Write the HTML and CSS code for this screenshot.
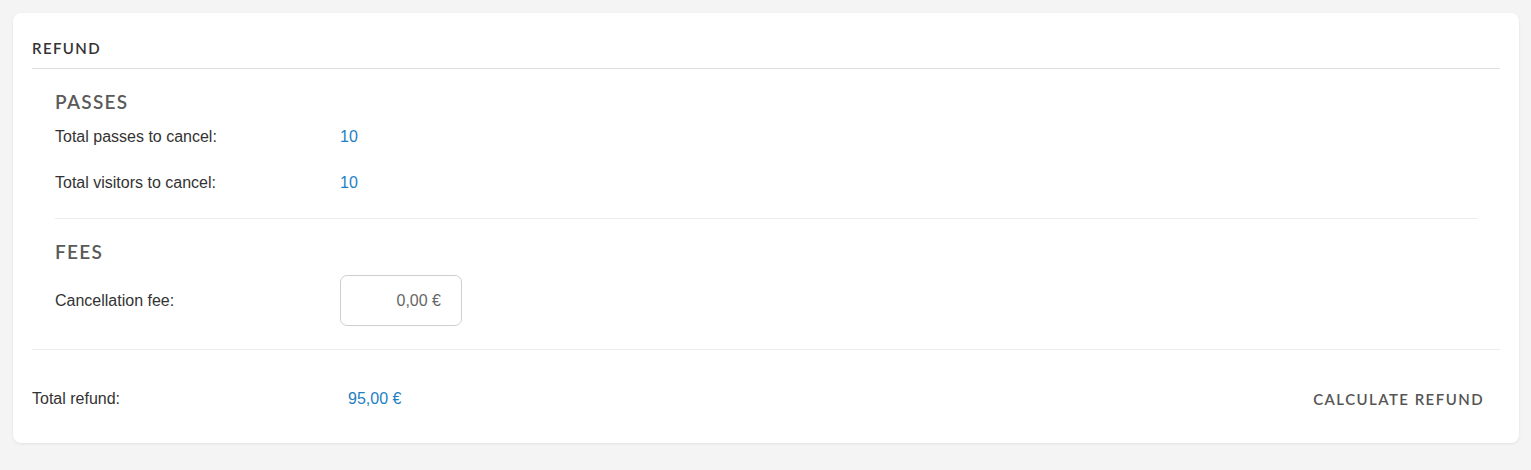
FILE: index.html
```html
<!DOCTYPE html>
<html lang="en">
<head>
<meta charset="utf-8">
<title>Refund</title>
<link rel="stylesheet" href="styles.css">
</head>
<body>
<div class="card">
  <div class="card-header">REFUND</div>
  <div class="section">
    <h3 class="section-title">PASSES</h3>
    <div class="row">
      <span class="label">Total passes to cancel:</span>
      <span class="value">10</span>
    </div>
    <div class="row">
      <span class="label">Total visitors to cancel:</span>
      <span class="value">10</span>
    </div>
  </div>
  <div class="section section-last">
    <h3 class="section-title">FEES</h3>
    <div class="row row-input">
      <span class="label">Cancellation fee:</span>
      <div class="money-input">0,00 €</div>
    </div>
  </div>
  <div class="card-footer">
    <span class="total-label">Total refund:</span>
    <span class="total-value">95,00 €</span>
    <button class="btn-text" type="button">CALCULATE REFUND</button>
  </div>
</div>
</body>
</html>
```

FILE: styles.css
```css
html, body {
  margin: 0;
  padding: 0;
}
body {
  background: #f4f4f4;
  padding: 13px 12px 13px 13px;
  font-family: "Liberation Sans", Arial, sans-serif;
  font-size: 16px;
  color: #333;
}
.card {
  background: #fff;
  border-radius: 8px;
  box-shadow: 0 1px 3px rgba(0, 0, 0, 0.08);
  padding: 0 19px;
}
.card-header {
  font-family: "Lato", "Open Sans", sans-serif;
  font-weight: 600;
  font-size: 15px;
  letter-spacing: 1.4px;
  color: #333;
  line-height: 20px;
  padding: 25px 0 10px;
  border-bottom: 1px solid #dedede;
}
.section {
  margin: 0 23px;
  padding: 21px 0 12px;
  border-bottom: 1px solid #ececec;
}
.section-last {
  margin: 0;
  padding: 21px 23px 12px;
  border-bottom: 1px solid #ececec;
}
.section-title {
  margin: 0;
  font-family: "Lato", "Open Sans", sans-serif;
  font-weight: 600;
  font-size: 19px;
  letter-spacing: 1.3px;
  line-height: 24px;
  color: #5a5a5a;
}
.row {
  display: flex;
  align-items: center;
  min-height: 46px;
}
.row-input {
  padding: 11px 0;
}
.label {
  width: 285px;
  color: #333;
}
.value {
  color: #1e80c3;
}
.money-input {
  box-sizing: border-box;
  width: 122px;
  height: 51px;
  border: 1px solid #cfcfcf;
  border-radius: 7px;
  display: flex;
  align-items: center;
  justify-content: flex-end;
  padding-right: 20px;
  color: #666;
}
.card-footer {
  display: flex;
  align-items: center;
  padding: 38px 0 33px;
  line-height: 22px;
}
.total-label {
  width: 316px;
  color: #333;
}
.total-value {
  color: #1e80c3;
  flex: 1;
}
.btn-text {
  background: none;
  border: none;
  padding: 0 16px;
  font-family: "Lato", "Open Sans", sans-serif;
  font-weight: 600;
  font-size: 15px;
  letter-spacing: 1.45px;
  color: #555;
  line-height: 22px;
  cursor: pointer;
}
```
